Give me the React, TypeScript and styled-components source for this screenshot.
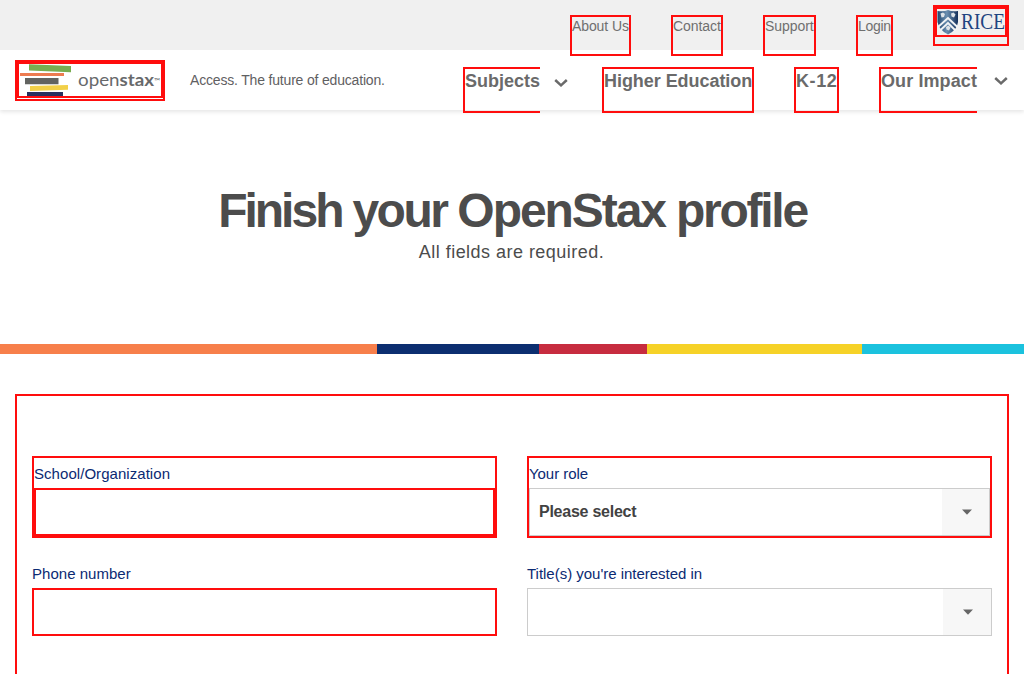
import React from 'react';
import styled, { createGlobalStyle, css } from 'styled-components';

const RED = '#ff0d0d';

const GlobalStyle = createGlobalStyle`
  *, *::before, *::after { box-sizing: border-box; }
  body {
    margin: 0;
    background: #fff;
    font-family: 'Liberation Sans', Arial, sans-serif;
    color: #4c4c4c;
    overflow: hidden;
  }
`;

const Page = styled.div`
  height: 674px;
  overflow: hidden;
`;

const outlined = css`
  border: 2px solid ${RED};
`;

const UtilityBar = styled.nav`
  display: flex;
  justify-content: flex-end;
  gap: 40px;
  height: 50px;
  padding: 5px 15px 0;
  background: #f0f0f0;
  position: relative;
  z-index: 2;
`;

const UtilityLink = styled.a<{ $width: number; $spacing: number }>`
  ${outlined}
  width: ${(p) => p.$width}px;
  height: 41px;
  margin-top: 10px;
  font-size: 14px;
  line-height: 18px;
  letter-spacing: ${(p) => p.$spacing}px;
  color: #6f6f6f;
  white-space: nowrap;
`;

const RiceLink = styled.a`
  ${outlined}
  width: 76px;
  height: 41px;
`;

const RicePicture = styled.span`
  ${outlined}
  display: block;
  height: 30px;
`;

const MainBar = styled.header`
  display: flex;
  height: 60px;
  padding: 10px 15px 0;
  background: #fff;
  box-shadow: 0 2px 4px rgba(0, 0, 0, 0.1);
  position: relative;
  z-index: 1;
`;

const LogoLink = styled.a`
  ${outlined}
  width: 150px;
  height: 41px;
`;

const LogoPicture = styled.span`
  ${outlined}
  display: block;
  height: 36px;
`;

const Tagline = styled.p`
  margin: 11px 0 0 25px;
  font-size: 14px;
  line-height: 18px;
  letter-spacing: -0.18px;
  color: #5f6062;
  white-space: nowrap;
`;

const MainNav = styled.nav`
  display: flex;
  margin: 7px 0 0 auto;
`;

const NavLink = styled.a<{ $width: number; $open?: boolean; $spacing: number }>`
  ${outlined}
  ${(p) => p.$open && 'border-right: 0;'}
  width: ${(p) => p.$width}px;
  height: 46px;
  font-size: 18px;
  font-weight: 700;
  line-height: 24px;
  letter-spacing: ${(p) => p.$spacing}px;
  color: #6a6a6a;
  white-space: nowrap;

  & + & { margin-left: 40px; }
`;

const Chevron = styled.svg<{ $top: number; $left: number; $right: number }>`
  display: block;
  width: 14px;
  height: 10px;
  margin: ${(p) => p.$top}px ${(p) => p.$right}px 0 ${(p) => p.$left}px;
`;

const Hero = styled.section`
  height: 234px;
  padding-top: 72px;
  text-align: center;
`;

const Title = styled.h1`
  margin: 0;
  padding-left: 1px;
  font-size: 48px;
  line-height: 58px;
  font-weight: 700;
  letter-spacing: -2.4px;
`;

const Word = styled.span<{ $spacing: number }>`
  letter-spacing: ${(p) => p.$spacing}px;
`;

const Subtitle = styled.p`
  margin: 0;
  padding-right: 1px;
  font-size: 18px;
  line-height: 24px;
  letter-spacing: 0.47px;
`;

const Stripe = styled.div`
  display: grid;
  grid-template-columns: 377px 162px 108px 215px 1fr;
  height: 10px;
`;

const Segment = styled.span<{ $color: string }>`
  background: ${(p) => p.$color};
`;

const Form = styled.form`
  ${outlined}
  display: grid;
  grid-template-columns: 1fr 1fr;
  align-content: start;
  gap: 18px 30px;
  height: 400px;
  margin: 40px 15px 0;
  padding: 60px 15px;
`;

const Field = styled.div<{ $outlined?: boolean }>`
  ${(p) => p.$outlined && outlined}
`;

const Label = styled.label<{ $height: number; $spacing: number }>`
  display: block;
  height: ${(p) => p.$height}px;
  padding-top: ${(p) => p.$height - 24}px;
  font-size: 15px;
  line-height: 20px;
  letter-spacing: ${(p) => p.$spacing}px;
  color: #0b2a73;
  white-space: nowrap;
`;

const TextInput = styled.input`
  ${outlined}
  display: block;
  width: 100%;
  height: 48px;
  padding: 0 10px;
  background: #fff;
  outline: none;
`;

const SelectBox = styled.div`
  display: flex;
  height: 48px;
  border: 1px solid #ccc;
  background: #fff;
`;

const SelectValue = styled.span`
  flex: 1;
  padding-left: 9px;
  font-size: 16px;
  font-weight: 700;
  line-height: 45px;
  letter-spacing: -0.25px;
  color: #424242;
`;

const SelectArrow = styled.span<{ $width: number }>`
  display: flex;
  align-items: center;
  justify-content: center;
  width: ${(p) => p.$width}px;
  padding-left: 2px;
  background: #f7f7f7;
`;

function ChevronIcon({ top, left, right }: { top: number; left: number; right: number }) {
  return (
    <Chevron $top={top} $left={left} $right={right} viewBox="0 0 14 10">
      <path d="M1.2 2 L7 7.3 L12.8 2" fill="none" stroke="#6a6a6a" strokeWidth="2.5" />
    </Chevron>
  );
}

function ArrowIcon() {
  return (
    <svg width="10" height="6" viewBox="0 0 10 6">
      <path d="M0 .5H10L5 5.8Z" fill="#666" />
    </svg>
  );
}

function OpenStaxLogo() {
  return (
    <svg width="146" height="32" viewBox="0 0 146 32" display="block">
      <path d="M10 .3L52 2V8.2L10 6.4Z" fill="#78ad50" />
      <path d="M1 9H45V12H1Z" fill="#ed7b50" />
      <path d="M6 14H39.5V20.3H6Z" fill="#626360" />
      <path d="M11 22.1L49 21.1V25.8L11 27Z" fill="#f2d048" />
      <path d="M8 28H44V32H8Z" fill="#28315f" />
      <g fontFamily="Lato, sans-serif" fontSize="17.5" fill="#68696b">
        <text x="59" y="21.5" textLength="41.5" lengthAdjust="spacingAndGlyphs">open</text>
        <text x="100.5" y="21.5" fontWeight="700" textLength="34.5" lengthAdjust="spacingAndGlyphs">stax</text>
        <text x="135" y="20" fontSize="8" textLength="7">™</text>
      </g>
    </svg>
  );
}

function RiceLogo() {
  return (
    <svg width="68" height="26" viewBox="0 0 68 26" display="block" overflow="visible">
      <defs>
        <linearGradient id="shield" x1="0" x2="1">
          <stop offset="0" stopColor="#21466e" />
          <stop offset=".45" stopColor="#6b8fb0" />
          <stop offset="1" stopColor="#14305b" />
        </linearGradient>
      </defs>
      <path d="M.5 2Q7 3 11 1Q15 3 21 2V13Q20 21 11 25.5Q2 21 .5 13Z" fill="url(#shield)" />
      <path d="M1 18L11 9L20.5 18M3 21.5L11 14L18.5 21.5" fill="none" stroke="#f2f4f6" strokeWidth="1.9" />
      <path d="M3.5 4.5L6 3.5L8 5L7 8L4.5 8.5ZM14 4.5L16.5 3.5L18.5 5.5L17 8.5L14.5 7.5ZM9 18L11.5 16.5L13.5 18.5L12 21.5L9.5 20.5Z" fill="#dde3e8" />
      <text x="24" y="20.3" fontFamily="'Liberation Serif', serif" fontSize="22.5" fill="#1f4480" textLength="44" lengthAdjust="spacingAndGlyphs">RICE</text>
    </svg>
  );
}

export default function App() {
  return (
    <Page>
      <GlobalStyle />
      <UtilityBar>
        <UtilityLink $width={61} $spacing={-0.1}>About Us</UtilityLink>
        <UtilityLink $width={52} $spacing={-0.05}>Contact</UtilityLink>
        <UtilityLink $width={53} $spacing={-0.05}>Support</UtilityLink>
        <UtilityLink $width={37} $spacing={-0.3}>Login</UtilityLink>
        <RiceLink><RicePicture><RiceLogo /></RicePicture></RiceLink>
      </UtilityBar>
      <MainBar>
        <LogoLink><LogoPicture><OpenStaxLogo /></LogoPicture></LogoLink>
        <Tagline>Access. The future of education.</Tagline>
        <MainNav>
          <NavLink $width={77} $open $spacing={0}>Subjects</NavLink>
          <ChevronIcon top={11} left={14} right={34} />
          <NavLink $width={152} $spacing={-0.05}>Higher Education</NavLink>
          <NavLink $width={45} $spacing={0.6}>K-12</NavLink>
          <NavLink $width={98} $open $spacing={0.1}>Our Impact</NavLink>
          <ChevronIcon top={9} left={17} right={1} />
        </MainNav>
      </MainBar>
      <Hero>
        <Title>
          <Word $spacing={-3}>Finish</Word> <Word $spacing={-2.5}>your</Word>{' '}
          <Word $spacing={-2.05}>OpenStax</Word> <Word $spacing={-2.25}>profile</Word>
        </Title>
        <Subtitle>All fields are required.</Subtitle>
      </Hero>
      <Stripe>
        <Segment $color="#f77f4b" />
        <Segment $color="#0c2e70" />
        <Segment $color="#c72c3f" />
        <Segment $color="#f6d227" />
        <Segment $color="#1bc2de" />
      </Stripe>
      <Form>
        <Field $outlined>
          <Label $height={30} $spacing={0.05}>School/Organization</Label>
          <TextInput />
        </Field>
        <Field $outlined>
          <Label $height={30} $spacing={-0.05}>Your role</Label>
          <SelectBox>
            <SelectValue>Please select</SelectValue>
            <SelectArrow $width={47}><ArrowIcon /></SelectArrow>
          </SelectBox>
        </Field>
        <Field>
          <Label $height={32} $spacing={0.03}>Phone number</Label>
          <TextInput />
        </Field>
        <Field>
          <Label $height={32} $spacing={-0.02}>Title(s) you're interested in</Label>
          <SelectBox>
            <SelectValue />
            <SelectArrow $width={48}><ArrowIcon /></SelectArrow>
          </SelectBox>
        </Field>
      </Form>
    </Page>
  );
}
